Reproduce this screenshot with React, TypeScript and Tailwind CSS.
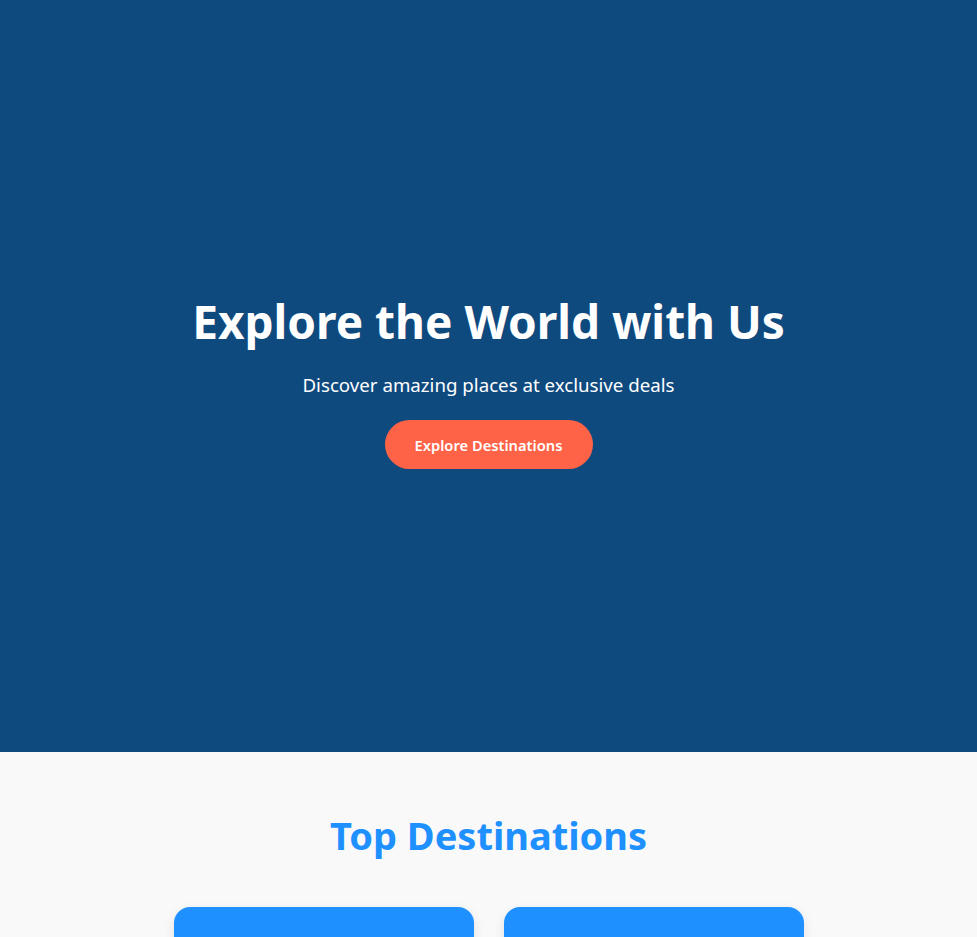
const font = { fontFamily: '"Noto Sans", "Open Sans", sans-serif' };

const destinations = ["Paris", "Tokyo", "Bali"];

export default function App() {
  return (
    <div className="min-h-screen bg-[#f9f9f9]" style={font}>
      <section className="h-[752px] pt-[11px] bg-[#0f4a7f] flex flex-col items-center justify-center text-white text-center">
        <h1 className="text-[46px] font-bold leading-[1.2] mb-[22px]">
          Explore the World with Us
        </h1>
        <p className="text-[18.7px] mb-[21px]">Discover amazing places at exclusive deals</p>
        <button className="bg-[#ff6347] text-white text-[14.7px] font-semibold w-[208px] h-[49px] rounded-full">
          Explore Destinations
        </button>
      </section>

      <section className="pt-[61px] px-5">
        <h2 className="text-[38px] font-bold text-[#1e90ff] text-center leading-[1.2] mb-[48px]">
          Top Destinations
        </h2>
        <div className="flex justify-center gap-[30px]">
          {destinations.slice(0, 2).map((d) => (
            <div
              key={d}
              className="w-[300px] h-[260px] bg-[#1e90ff] rounded-2xl shadow-[0_4px_12px_rgba(0,0,0,0.1)]"
            />
          ))}
        </div>
      </section>
    </div>
  );
}
